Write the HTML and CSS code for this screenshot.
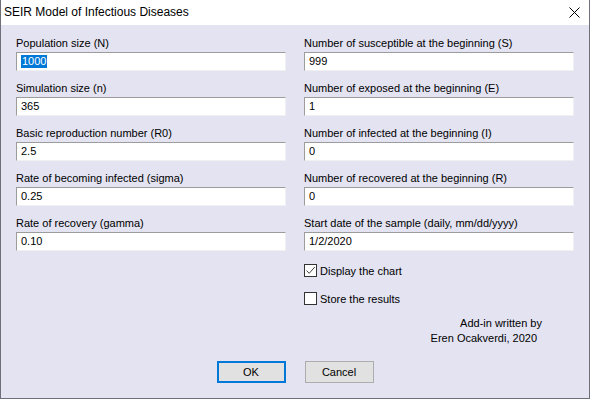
FILE: index.html
```html
<!DOCTYPE html>
<html>
<head>
  <title>SEIR Model of Infectious Diseases</title>
  <link rel="stylesheet" href="styles.css">
</head>
<body>
  <div class="window">
    <div class="titlebar">
      <span class="title">SEIR Model of Infectious Diseases</span>
      <span class="close">
        <svg width="11" height="11" viewBox="0 0 11 11">
          <path d="M0.5 0.5 L10.5 10.5 M10.5 0.5 L0.5 10.5" stroke="#000" stroke-width="1" fill="none"/>
        </svg>
      </span>
    </div>

    <div class="dialog">
      <div class="columns">
        <div class="column">
          <div class="field">
            <label>Population size (N)</label>
            <div class="textbox"><span class="selected">1000</span></div>
          </div>
          <div class="field">
            <label>Simulation size (n)</label>
            <div class="textbox">365</div>
          </div>
          <div class="field">
            <label>Basic reproduction number (R0)</label>
            <div class="textbox">2.5</div>
          </div>
          <div class="field">
            <label>Rate of becoming infected (sigma)</label>
            <div class="textbox">0.25</div>
          </div>
          <div class="field">
            <label>Rate of recovery (gamma)</label>
            <div class="textbox">0.10</div>
          </div>
        </div>

        <div class="column">
          <div class="field">
            <label>Number of susceptible at the beginning (S)</label>
            <div class="textbox">999</div>
          </div>
          <div class="field">
            <label>Number of exposed at the beginning (E)</label>
            <div class="textbox">1</div>
          </div>
          <div class="field">
            <label>Number of infected at the beginning (I)</label>
            <div class="textbox">0</div>
          </div>
          <div class="field">
            <label>Number of recovered at the beginning (R)</label>
            <div class="textbox">0</div>
          </div>
          <div class="field">
            <label>Start date of the sample (daily, mm/dd/yyyy)</label>
            <div class="textbox">1/2/2020</div>
          </div>

          <div class="check">
            <span class="box">
              <svg width="11" height="11" viewBox="0 0 11 11">
                <path d="M1.5 5.5 L4.2 8.3 L9.8 2" stroke="#444" stroke-width="1" fill="none"/>
              </svg>
            </span>
            <span>Display the chart</span>
          </div>
          <div class="check">
            <span class="box"></span>
            <span>Store the results</span>
          </div>

          <div class="credit">
            <div>Add-in written by</div>
            <div class="author">Eren Ocakverdi, 2020</div>
          </div>
        </div>
      </div>

      <div class="buttons">
        <button class="default">OK</button>
        <button>Cancel</button>
      </div>
    </div>
  </div>
</body>
</html>
```

FILE: styles.css
```css
body {
  margin: 0;
  font-family: "Liberation Sans", Arial, sans-serif;
  font-size: 11px;
  color: #000;
}

.window {
  width: 590px;
  height: 399px;
  box-sizing: border-box;
  border: 1px solid #6f6f7a;
  border-top: none;
  background-color: #e3e3f1;
  display: flex;
  flex-direction: column;
}

.titlebar {
  height: 25px;
  background-color: #fff;
  display: flex;
  align-items: center;
  justify-content: space-between;
  padding: 0 9px 0 3px;
}

.title {
  font-size: 12px;
  padding-bottom: 1px;
}

.close {
  display: flex;
  margin-top: -1px;
}

.dialog {
  padding: 12px 15px 0 15px;
  display: flex;
  flex-direction: column;
}

.columns {
  display: grid;
  grid-template-columns: 270px 270px;
  column-gap: 18px;
}

.column {
  display: flex;
  flex-direction: column;
}

.field {
  display: flex;
  flex-direction: column;
  margin-bottom: 11px;
}

.field label {
  line-height: 13px;
  margin-bottom: 2px;
}

.textbox {
  height: 19px;
  box-sizing: border-box;
  background-color: #fff;
  border-top: 1px solid #9c9c9c;
  border-left: 1px solid #9c9c9c;
  border-right: 1px solid #f0f0f0;
  border-bottom: 1px solid #f0f0f0;
  padding: 0 4px;
  line-height: 17px;
  display: flex;
  align-items: center;
}

.selected {
  background-color: #0078d7;
  color: #fff;
  padding: 0 1px;
  line-height: 13px;
}

.check {
  display: flex;
  align-items: center;
  gap: 3px;
  height: 13px;
  margin-top: 2px;
  margin-bottom: 13px;
}

.check .box {
  width: 13px;
  height: 13px;
  box-sizing: border-box;
  border: 1px solid #333;
  background-color: #fff;
  display: flex;
}

.credit {
  margin-top: -2px;
  text-align: right;
  padding-right: 32px;
  line-height: 15px;
}

.credit .author {
  padding-right: 5px;
}

.buttons {
  display: flex;
  justify-content: center;
  gap: 19px;
  margin-top: 15px;
}

.buttons button {
  width: 69px;
  height: 22px;
  box-sizing: border-box;
  background-color: #e1e1e1;
  border: 1px solid #adadad;
  font-family: "Liberation Sans", Arial, sans-serif;
  font-size: 11px;
  padding: 0;
}

.buttons button.default {
  border: 2px solid #0078d7;
}
```
